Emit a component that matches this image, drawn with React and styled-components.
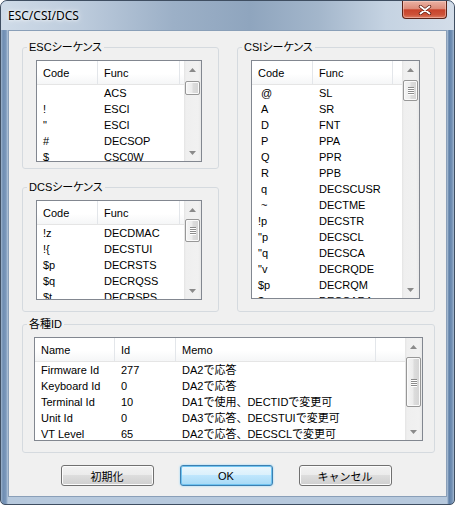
import React from 'react'
import styled, { createGlobalStyle } from 'styled-components'

const GlobalStyle = createGlobalStyle`
  html, body {
    margin: 0;
    padding: 0;
    background: #fff;
  }
  body {
    font-family: "Liberation Sans", "Noto Sans CJK JP", sans-serif;
    font-size: 11px;
    color: #000;
  }
`

const escRows = [
  ['', 'ACS'],
  ['!', 'ESCI'],
  ['"', 'ESCI'],
  ['#', 'DECSOP'],
  ['$', 'CSC0W'],
]

const dcsRows = [
  ['!z', 'DECDMAC'],
  ['!{', 'DECSTUI'],
  ['$p', 'DECRSTS'],
  ['$q', 'DECRQSS'],
  ['$t', 'DECRSPS'],
]

// single final chars are shown with a leading space
const csiRows = [
  ['\u00a0@', 'SL'],
  ['\u00a0A', 'SR'],
  ['\u00a0D', 'FNT'],
  ['\u00a0P', 'PPA'],
  ['\u00a0Q', 'PPR'],
  ['\u00a0R', 'PPB'],
  ['\u00a0q', 'DECSCUSR'],
  ['\u00a0~', 'DECTME'],
  ['!p', 'DECSTR'],
  ['"p', 'DECSCL'],
  ['"q', 'DECSCA'],
  ['"v', 'DECRQDE'],
  ['$p', 'DECRQM'],
  ['$r', 'DECCARA'],
]

const idRows = [
  ['Firmware Id', '277', 'DA2で応答'],
  ['Keyboard Id', '0', 'DA2で応答'],
  ['Terminal Id', '10', 'DA1で使用、DECTIDで変更可'],
  ['Unit Id', '0', 'DA3で応答、DECSTUIで変更可'],
  ['VT Level', '65', 'DA2で応答、DECSCLで変更可'],
]

const seqCols = [
  { label: 'Code', w: 61 },
  { label: 'Func', w: 82 },
]

const csiCols = [
  { label: 'Code', w: 61 },
  { label: 'Func', w: 80 },
]

const idCols = [
  { label: 'Name', w: 80 },
  { label: 'Id', w: 61 },
  { label: 'Memo', w: 200 },
]

function ArrowIcon({ down }) {
  return (
    <svg width="7" height="4" viewBox="0 0 7 4">
      <path d={down ? 'M0 0 H7 L3.5 4 Z' : 'M0 4 H7 L3.5 0 Z'} fill="#8a8a8a" />
    </svg>
  )
}

function ScrollBar({ top, h, grip }) {
  return (
    <Bar>
      <ArrowBtn><ArrowIcon /></ArrowBtn>
      <Track>
        <Thumb $top={top} $h={h}>
          {grip && (
            <Grip>
              <span /><span /><span /><span />
            </Grip>
          )}
        </Thumb>
      </Track>
      <ArrowBtn><ArrowIcon down /></ArrowBtn>
    </Bar>
  )
}

function ListView({ cols, rows, width, height, thumb }) {
  return (
    <List $w={width} $h={height}>
      <ListMain>
        <Header>
          {cols.map(c => (
            <HeadCell key={c.label} $w={c.w}>{c.label}</HeadCell>
          ))}
          <HeadFill />
        </Header>
        {rows.map((r, i) => (
          <Row key={i}>
            {cols.map((c, j) => (
              <Cell key={j} $w={c.w}>{r[j]}</Cell>
            ))}
          </Row>
        ))}
      </ListMain>
      <ScrollBar {...thumb} />
    </List>
  )
}

function CloseIcon() {
  return (
    <svg width="14" height="10" viewBox="0 0 14 10">
      <path d="M2.5 1.5 L11.5 8.5 M11.5 1.5 L2.5 8.5" stroke="#5b1a10" strokeWidth="3.4" strokeLinecap="round" fill="none" />
      <path d="M2.5 1.5 L11.5 8.5 M11.5 1.5 L2.5 8.5" stroke="#fff" strokeWidth="1.9" strokeLinecap="round" fill="none" />
    </svg>
  )
}

export default function App() {
  return (
    <>
      <GlobalStyle />
      <Window>
        <TitleBar>
          <Title>ESC/CSI/DCS</Title>
          <CloseBtn><CloseIcon /></CloseBtn>
        </TitleBar>
        <Client>
          <TopArea>
            <LeftStack>
              <Group $h={129}>
                <Legend>ESCシーケンス</Legend>
                <GroupBody $pt={6}>
                  <ListView cols={seqCols} rows={escRows} width={166} height={102}
                    thumb={{ top: 3, h: 14 }} />
                </GroupBody>
              </Group>
              <Group $h={132}>
                <Legend>DCSシーケンス</Legend>
                <GroupBody $pt={6}>
                  <ListView cols={seqCols} rows={dcsRows} width={166} height={100}
                    thumb={{ top: 1, h: 23, grip: true }} />
                </GroupBody>
              </Group>
            </LeftStack>
            <Group $h={272}>
              <Legend>CSIシーケンス</Legend>
              <GroupBody $pt={6}>
                <ListView cols={csiCols} rows={csiRows} width={169} height={239}
                  thumb={{ top: 2, h: 21, grip: true }} />
              </GroupBody>
            </Group>
          </TopArea>
          <IdGroup $h={136}>
            <Legend>各種ID</Legend>
            <GroupBody $pt={6} $pl={11}>
              <ListView cols={idCols} rows={idRows} width={389} height={104}
                thumb={{ top: 2, h: 50, grip: true }} />
            </GroupBody>
          </IdGroup>
          <ButtonRow>
            <Btn>初期化</Btn>
            <Btn $default>OK</Btn>
            <Btn>キャンセル</Btn>
          </ButtonRow>
        </Client>
      </Window>
    </>
  )
}

const Window = styled.div`
  width: 455px;
  height: 505px;
  box-sizing: border-box;
  display: flex;
  flex-direction: column;
  border: 1px solid #3f4e61;
  border-radius: 7px 7px 5px 5px;
  overflow: hidden;
  background: linear-gradient(90deg,
    #9fb5cd 0, #6f8db2 2px, #7b98bb 5px, #b7c9dd 7px,
    #b7c9dd calc(100% - 7px), #5f80a8 calc(100% - 5px), #7390b4 calc(100% - 2px), #a5bad1 100%);
`

const TitleBar = styled.div`
  height: 29px;
  flex: none;
  display: flex;
  justify-content: space-between;
  align-items: center;
  padding: 0 7px 0 7px;
  background: linear-gradient(90deg,
    #cfdbe8 0%, #bccbdc 18%, #9cb0c7 38%, #8fa5be 55%, #a3b6cb 70%, #c5d3e2 85%, #d3dde9 100%);
`

const Title = styled.div`
  font-family: "Noto Sans", "Open Sans", sans-serif;
  font-size: 12px;
  color: #000;
  text-shadow: 0 0 6px #fff, 0 0 3px #fff;
`

const CloseBtn = styled.div`
  align-self: flex-start;
  width: 45px;
  height: 18px;
  box-sizing: border-box;
  display: flex;
  align-items: center;
  justify-content: center;
  border: 1px solid #5a2318;
  border-top: none;
  border-radius: 0 0 4px 4px;
  background: linear-gradient(#eab2a4 0%, #dd8c7a 45%, #c8432b 52%, #cd5238 80%, #dc7c62 100%);
  box-shadow: inset 0 0 0 1px rgba(255, 220, 210, 0.45);
`

const Client = styled.div`
  flex: 1;
  margin: 0 7px 7px 7px;
  border: 1px solid #8a9fb8;
  background: #f0f0f0;
  padding: 9px 11px 0 13px;
  display: flex;
  flex-direction: column;
`

const TopArea = styled.div`
  display: grid;
  grid-template-columns: 197px 198px;
  column-gap: 18px;
`

const LeftStack = styled.div`
  display: flex;
  flex-direction: column;
  gap: 11px;
`

const Group = styled.fieldset`
  margin: 0;
  padding: 0;
  min-width: 0;
  box-sizing: border-box;
  height: ${p => p.$h}px;
  border: 1px solid #d5dadf;
  border-radius: 3px;
`

const IdGroup = styled(Group)`
  margin-top: 5px;
`

const Legend = styled.legend`
  margin-left: 4px;
  padding: 0 2px;
  line-height: 14px;
  font-feature-settings: "palt";
`

const GroupBody = styled.div`
  padding: ${p => p.$pt || 5}px 0 0 ${p => p.$pl || 13}px;
`

const List = styled.div`
  width: ${p => p.$w}px;
  height: ${p => p.$h}px;
  box-sizing: border-box;
  display: flex;
  border: 1px solid #828790;
  background: #fff;
  overflow: hidden;
`

const ListMain = styled.div`
  flex: 1;
  min-width: 0;
  overflow: hidden;
`

const Header = styled.div`
  display: flex;
  height: 24px;
  box-sizing: border-box;
  border-bottom: 1px solid #e5e5e5;
  background: linear-gradient(#ffffff 0%, #ffffff 55%, #f5f6f7 100%);
`

const HeadCell = styled.div`
  flex: none;
  width: ${p => p.$w}px;
  box-sizing: border-box;
  padding-left: 6px;
  display: flex;
  align-items: center;
  border-right: 1px solid #e3e6ea;
  white-space: nowrap;
`

const HeadFill = styled.div`
  flex: 1;
`

const Row = styled.div`
  display: flex;
  height: 16px;
  line-height: 16px;
`

const Cell = styled.div`
  flex: none;
  width: ${p => p.$w}px;
  box-sizing: border-box;
  padding-left: 6px;
  white-space: nowrap;
  overflow: hidden;
`

const Bar = styled.div`
  flex: none;
  width: 17px;
  display: flex;
  flex-direction: column;
  background: linear-gradient(90deg, #e4e4e4 0, #efefef 2px, #f1f1f1 14px, #e9e9e9 100%);
`

const ArrowBtn = styled.div`
  height: 17px;
  flex: none;
  display: flex;
  align-items: center;
  justify-content: center;
`

const Track = styled.div`
  flex: 1;
  padding: 0 1px;
`

const Thumb = styled.div`
  margin-top: ${p => p.$top}px;
  height: ${p => p.$h}px;
  box-sizing: border-box;
  border: 1px solid #979797;
  border-radius: 2px;
  background: linear-gradient(90deg, #f5f5f5 0%, #ececec 45%, #dcdcdc 55%, #d4d4d4 100%);
  box-shadow: inset 0 0 0 1px #fafafa;
  display: flex;
  align-items: center;
  justify-content: center;
`

const Grip = styled.div`
  display: flex;
  flex-direction: column;
  gap: 1px;

  span {
    display: block;
    width: 6px;
    height: 1px;
    background: #8b8b8b;
    box-shadow: 0 1px 0 #fff;
  }
`

const ButtonRow = styled.div`
  margin-top: 12px;
  padding-right: 5px;
  display: flex;
  justify-content: center;
  gap: 26px;
`

const Btn = styled.button`
  width: 93px;
  height: 21px;
  padding: 0;
  font-family: "Liberation Sans", "Noto Sans CJK JP", sans-serif;
  font-size: 11px;
  color: #000;
  border-radius: 3px;
  border: 1px solid ${p => (p.$default ? '#3c7fb1' : '#707070')};
  background: ${p => (p.$default
    ? 'linear-gradient(#eaf6fd 0%, #d9f0fc 50%, #bee6fd 50%, #a7d9f5 100%)'
    : 'linear-gradient(#f2f2f2 0%, #ebebeb 50%, #dddddd 50%, #cfcfcf 100%)')};
  box-shadow: ${p => (p.$default
    ? 'inset 0 0 0 1px #6fc3f0, 0 0 2px #7fd0ff'
    : 'inset 0 0 0 1px #fcfcfc')};
`
